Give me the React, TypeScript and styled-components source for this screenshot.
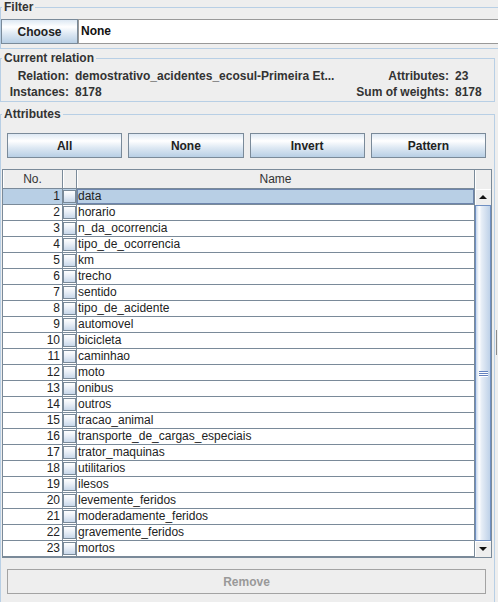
import React from 'react';
import styled, { createGlobalStyle } from 'styled-components';

const Global = createGlobalStyle`
  html, body { margin: 0; padding: 0; background: #eeeeee; }
  body { font-family: "Liberation Sans", Arial, sans-serif; font-size: 12px; color: #333333; }
  * { box-sizing: border-box; }
`;

const Page = styled.div`
  width: 498px;
  height: 602px;
  overflow: hidden;
  display: flex;
  background: #eeeeee;
`;

const Main = styled.div`
  width: 495px;
  flex: none;
  display: flex;
  flex-direction: column;
`;

const Splitter = styled.div`
  flex: 1;
  display: flex;
  flex-direction: column;
  align-items: flex-end;
  padding-right: 1px;
`;

const SplitGrip = styled.div`
  margin-top: 330px;
  width: 1px;
  height: 25px;
  background: #8a8a8a;
`;

const Group = styled.fieldset<{ $mt?: number; $extend?: boolean; $pb?: number }>`
  margin: ${p => p.$mt ?? 0}px ${p => (p.$extend ? -24 : 0)}px 0 0;
  padding: 0 0 ${p => p.$pb ?? 0}px 0;
  border: 1px solid #b8cfe5;
  min-width: 0;
`;

const Title = styled.legend`
  margin-left: 1px;
  padding: 0 2px;
  font-weight: bold;
  font-size: 12px;
  line-height: 14px;
  color: #333333;
`;

const FilterRow = styled.div`
  display: flex;
  padding: 5px 0 4px 0;
`;

const OceanButton = styled.button`
  height: 25px;
  border: 1px solid #7a8a99;
  border-radius: 0;
  padding: 0;
  font-family: "Liberation Sans", Arial, sans-serif;
  font-size: 12px;
  font-weight: bold;
  color: #222222;
  background: linear-gradient(
    to bottom,
    #dde8f3 0%,
    #ffffff 30%,
    #dde8f3 60%,
    #b8cfe5 100%
  );
`;

const ChooseButton = styled(OceanButton)`
  width: 77px;
  flex: none;
`;

const TextField = styled.div`
  flex: 1;
  height: 25px;
  background: #ffffff;
  border: 1px solid #999999;
  padding-left: 2px;
  font-weight: bold;
  color: #111111;
  line-height: 23px;
`;

const InfoGrid = styled.div`
  display: grid;
  grid-template-columns: 69px 1fr auto 39px;
  column-gap: 5px;
  padding: 3px 0 1px 0;
`;

const InfoText = styled.span<{ $right?: boolean }>`
  font-weight: bold;
  line-height: 16px;
  height: 16px;
  white-space: nowrap;
  color: #333333;
  text-align: ${p => (p.$right ? 'right' : 'left')};
  padding-right: ${p => (p.$right ? 1 : 0)}px;
`;

const ButtonRow = styled.div`
  display: grid;
  grid-template-columns: repeat(4, 1fr);
  column-gap: 6px;
  padding: 12px 8px 0 6px;
`;

const ScrollPane = styled.div`
  margin: 11px 2px 0 1px;
  border: 1px solid #7a8a99;
  background: #ffffff;
  display: flex;
  flex-direction: column;
`;

const HeaderRow = styled.div`
  display: flex;
  height: 19px;
  background: #eeeeee;
`;

const HeaderCell = styled.div<{ $w: number; $corner?: boolean }>`
  width: ${p => p.$w}px;
  flex: none;
  border-right: ${p => (p.$corner ? 'none' : '1px solid #7a8a99')};
  border-bottom: ${p => (p.$corner ? 'none' : '1px solid #7a8a99')};
  box-shadow: inset 1px 0 0 #ffffff;
  text-align: center;
  line-height: 18px;
  color: #333333;
  font-size: 12px;
`;

const Body = styled.div`
  display: flex;
`;

const Rows = styled.div`
  width: 472px;
  flex: none;
`;

const Row = styled.div`
  display: flex;
  height: 16px;
`;

const Cell = styled.div<{ $w: number; $sel?: boolean; $focus?: boolean; $align?: string }>`
  width: ${p => p.$w}px;
  flex: none;
  height: 16px;
  border-right: 1px solid #7a8a99;
  border-bottom: 1px solid #7a8a99;
  background: ${p => (p.$sel ? '#b8cfe5' : '#ffffff')};
  box-shadow: ${p => (p.$focus ? 'inset 0 0 0 1px #6d85ad' : 'none')};
  padding: 0 ${p => (p.$align === 'right' ? 2 : 0)}px 0 ${p => (p.$align === 'left' ? 1 : 0)}px;
  line-height: 15px;
  font-size: 12px;
  color: #222222;
  white-space: nowrap;
  overflow: hidden;
  display: flex;
  align-items: center;
  justify-content: ${p => (p.$align === 'right' ? 'flex-end' : p.$align === 'center' ? 'center' : 'flex-start')};
`;

const CheckBox = styled.span`
  width: 13px;
  height: 13px;
  border: 1px solid #7a8a99;
  background: linear-gradient(to bottom, #ffffff 0%, #e9eff7 45%, #c9d8ea 100%);
`;

const ScrollBar = styled.div`
  width: 16px;
  flex: none;
  display: flex;
  flex-direction: column;
  background: #eeeeee;
`;

const ArrowButton = styled.div`
  height: 16px;
  flex: none;
  display: flex;
  align-items: center;
  justify-content: center;
  background: #eeeeee;
  box-shadow: inset 1px 1px 0 #ffffff;
`;

const Thumb = styled.div`
  flex: 1;
  border: 1px solid #6f8fc2;
  background: linear-gradient(
    to right,
    #c6d7ec 0%,
    #ffffff 22%,
    #e6edf6 40%,
    #d2dfef 70%,
    #bed1e8 100%
  );
  display: flex;
  align-items: center;
  justify-content: center;
`;

const Grip = styled.div`
  width: 9px;
  display: flex;
  flex-direction: column;
  gap: 1px;
  margin-left: 1px;
`;

const GripLine = styled.div`
  height: 1px;
  background: #6382bf;
  box-shadow: 0 1px 0 #ffffff;
`;

const RemoveRow = styled.div`
  display: flex;
  padding: 11px 8px 0 6px;
`;

const RemoveButton = styled.button`
  flex: 1;
  height: 25px;
  border: 1px solid #a3a3a3;
  border-radius: 0;
  background: #eeeeee;
  font-family: "Liberation Sans", Arial, sans-serif;
  font-size: 12px;
  font-weight: bold;
  color: #999999;
  padding: 0;
`;

const names = [
  'data',
  'horario',
  'n_da_ocorrencia',
  'tipo_de_ocorrencia',
  'km',
  'trecho',
  'sentido',
  'tipo_de_acidente',
  'automovel',
  'bicicleta',
  'caminhao',
  'moto',
  'onibus',
  'outros',
  'tracao_animal',
  'transporte_de_cargas_especiais',
  'trator_maquinas',
  'utilitarios',
  'ilesos',
  'levemente_feridos',
  'moderadamente_feridos',
  'gravemente_feridos',
  'mortos',
];

const UpArrow = () => (
  <svg width="8" height="4" viewBox="0 0 8 4">
    <polygon points="4,0 8,4 0,4" fill="#111" />
  </svg>
);

const DownArrow = () => (
  <svg width="8" height="4" viewBox="0 0 8 4">
    <polygon points="0,0 8,0 4,4" fill="#111" />
  </svg>
);

export default function App() {
  return (
    <>
      <Global />
      <Page>
        <Main>
          <Group $extend>
            <Title>Filter</Title>
            <FilterRow>
              <ChooseButton>Choose</ChooseButton>
              <TextField>None</TextField>
            </FilterRow>
          </Group>

          <Group $mt={2}>
            <Title>Current relation</Title>
            <InfoGrid>
              <InfoText $right>Relation:</InfoText>
              <InfoText>demostrativo_acidentes_ecosul-Primeira Et...</InfoText>
              <InfoText $right>Attributes:</InfoText>
              <InfoText>23</InfoText>
              <InfoText $right>Instances:</InfoText>
              <InfoText>8178</InfoText>
              <InfoText $right>Sum of weights:</InfoText>
              <InfoText>8178</InfoText>
            </InfoGrid>
          </Group>

          <Group $mt={5} $pb={30}>
            <Title>Attributes</Title>
            <ButtonRow>
              <OceanButton>All</OceanButton>
              <OceanButton>None</OceanButton>
              <OceanButton>Invert</OceanButton>
              <OceanButton>Pattern</OceanButton>
            </ButtonRow>
            <ScrollPane>
              <HeaderRow>
                <HeaderCell $w={60}>No.</HeaderCell>
                <HeaderCell $w={14}></HeaderCell>
                <HeaderCell $w={398}>Name</HeaderCell>
                <HeaderCell $w={16} $corner></HeaderCell>
              </HeaderRow>
              <Body>
                <Rows>
                  {names.map((n, i) => {
                    const sel = i === 0;
                    return (
                      <Row key={n}>
                        <Cell $w={60} $sel={sel} $align="right">{i + 1}</Cell>
                        <Cell $w={14} $sel={sel} $align="center">
                          <CheckBox />
                        </Cell>
                        <Cell $w={398} $sel={sel} $focus={sel} $align="left">{n}</Cell>
                      </Row>
                    );
                  })}
                </Rows>
                <ScrollBar>
                  <ArrowButton><UpArrow /></ArrowButton>
                  <Thumb>
                    <Grip>
                      <GripLine />
                      <GripLine />
                      <GripLine />
                    </Grip>
                  </Thumb>
                  <ArrowButton><DownArrow /></ArrowButton>
                </ScrollBar>
              </Body>
            </ScrollPane>
            <RemoveRow>
              <RemoveButton disabled>Remove</RemoveButton>
            </RemoveRow>
          </Group>
        </Main>
        <Splitter>
          <SplitGrip />
        </Splitter>
      </Page>
    </>
  );
}
